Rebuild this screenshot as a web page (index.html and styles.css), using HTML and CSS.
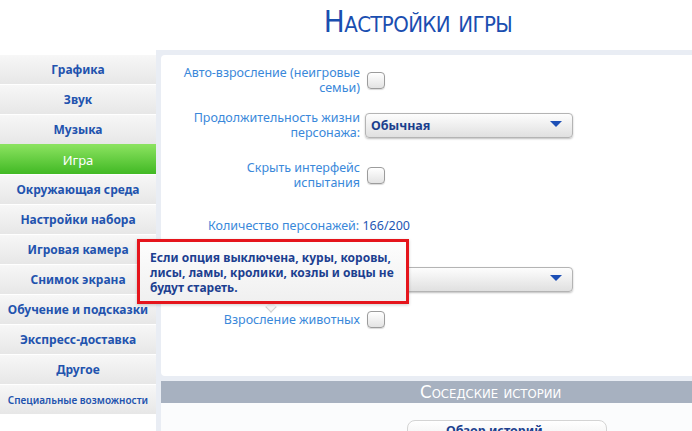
FILE: index.html
```html
<!DOCTYPE html>
<html lang="ru">
<head>
  <meta charset="UTF-8">
  <title>Настройки игры</title>
  <link rel="stylesheet" href="styles.css">
</head>
<body>
  <div class="page">
    <div class="top">
      <h1 class="title">Настройки игры</h1>
    </div>

    <nav class="menu">
      <div class="menu-item">Графика</div>
      <div class="menu-item">Звук</div>
      <div class="menu-item">Музыка</div>
      <div class="menu-item active">Игра</div>
      <div class="menu-item">Окружающая среда</div>
      <div class="menu-item">Настройки набора</div>
      <div class="menu-item">Игровая камера</div>
      <div class="menu-item">Снимок экрана</div>
      <div class="menu-item">Обучение и подсказки</div>
      <div class="menu-item">Экспресс-доставка</div>
      <div class="menu-item">Другое</div>
      <div class="menu-item small">Специальные возможности</div>
    </nav>

    <main class="panel">
      <div class="settings">
        <div class="row r1">
          <div class="label">Авто-взросление (неигровые семьи)</div>
          <div class="check"></div>
        </div>
        <div class="row r2">
          <div class="label">Продолжительность жизни персонажа:</div>
          <div class="select"><span>Обычная</span><i class="arrow"></i></div>
        </div>
        <div class="row r3">
          <div class="label">Скрыть интерфейс испытания</div>
          <div class="check"></div>
        </div>
        <div class="row r4">
          <div class="count">Количество персонажей: <b>166/200</b></div>
        </div>
        <div class="row r5">
          <div class="label"></div>
          <div class="select"><span></span><i class="arrow"></i></div>
        </div>
        <div class="row r6">
          <div class="label">Взросление животных</div>
          <div class="check"></div>
        </div>

        <div class="tooltip">Если опция выключена, куры, коровы, лисы, ламы, кролики, козлы и овцы не будут стареть.</div>
        <div class="tip-caret"></div>
      </div>

      <div class="section-head">Соседские истории</div>
      <div class="section-body">
        <button class="btn">Обзор историй</button>
      </div>
    </main>
  </div>
</body>
</html>
```

FILE: styles.css
```css
* {
  margin: 0;
  padding: 0;
  box-sizing: border-box;
}

body {
  background: #fff;
  font-family: 'Noto Sans', 'DejaVu Sans', sans-serif;
  width: 692px;
  height: 431px;
  overflow: hidden;
}

.page {
  display: grid;
  grid-template-columns: 156px 1fr;
  grid-template-rows: 50px 1fr;
}

.top {
  grid-column: 2;
  display: flex;
  justify-content: center;
  padding-right: 12px;
}

.title {
  font-family: 'DejaVu Sans Condensed', 'DejaVu Sans', sans-serif;
  font-variant: small-caps;
  font-weight: normal;
  font-size: 31px;
  line-height: 40px;
  color: #1a4eb0;
  letter-spacing: -0.6px;
  margin-top: 1px;
}

/* левое меню */
.menu {
  grid-column: 1;
  grid-row: 2;
  padding-top: 4px;
}

.menu-item {
  height: 30px;
  display: flex;
  align-items: center;
  justify-content: center;
  font-size: 12px;
  font-weight: bold;
  color: #2253ae;
  background: linear-gradient(#f7f7f7, #e7e7e7);
  border-top: 1px solid #fff;
}

.menu-item.small {
  font-size: 10px;
  font-weight: 600;
}

.menu-item.active {
  color: #fff;
  font-weight: normal;
  font-size: 13px;
  background: linear-gradient(#8ae25f, #41b924);
  border-top-color: #8ae25f;
}

/* правая панель */
.panel {
  grid-column: 2;
  grid-row: 2;
  background: #e9edf4;
  padding: 5px 0 0 5px;
  height: 381px;
}

.settings {
  position: relative;
  background: #fff;
  border-radius: 4px 0 0 4px;
  height: 321px;
  padding-top: 7px;
}

.row {
  display: grid;
  grid-template-columns: 199px 1fr;
  column-gap: 7px;
  align-items: center;
  height: 36px;
}

.r2 { margin-top: 9px; }
.r3 { margin-top: 14px; }
.r4 { margin-top: 14px; }
.r5 { margin-top: 18px; }
.r6 { margin-top: 4px; }

.label {
  text-align: right;
  font-size: 12.5px;
  line-height: 15px;
  color: #3a88da;
  padding-left: 14px;
}

.r3 .label {
  padding-left: 70px;
}

.count {
  grid-column: 1 / 3;
  padding-left: 47px;
  font-size: 12.5px;
  color: #3a88da;
}

.count b {
  font-weight: normal;
  color: #1e56b4;
}

.check {
  width: 18px;
  height: 17px;
  border: 1px solid #9c9c9c;
  border-radius: 4px;
  background: linear-gradient(#fff, #e3e3e3);
  box-shadow: 0 1px 1px rgba(0, 0, 0, 0.15);
}

.select {
  width: 208px;
  height: 25px;
  margin-left: -2px;
  border: 1px solid #b4b4b4;
  border-radius: 4px;
  background: linear-gradient(#fdfdfd, #e0e0e0);
  box-shadow: 0 1px 2px rgba(0, 0, 0, 0.25);
  display: flex;
  align-items: center;
  justify-content: space-between;
  padding: 0 10px 0 5px;
}

.select span {
  font-size: 12.5px;
  font-weight: bold;
  color: #1b3f8e;
}

.arrow {
  width: 0;
  height: 0;
  border-left: 6px solid transparent;
  border-right: 6px solid transparent;
  border-top: 6px solid #1c4fb6;
  margin-top: -2px;
}

/* подсказка */
.tooltip {
  position: absolute;
  left: -24px;
  top: 184px;
  width: 272px;
  height: 65px;
  padding: 8px 11px 0 10px;
  background: linear-gradient(#fdfdfd, #f0f0f0);
  border: 3px solid #e5151c;
  box-shadow: 0 1px 3px rgba(0, 0, 0, 0.2);
  font-size: 12px;
  line-height: 15px;
  font-weight: bold;
  color: #1c3f90;
  z-index: 2;
}

.tip-caret {
  position: absolute;
  left: 106px;
  top: 248px;
  width: 8px;
  height: 8px;
  background: #f6f6f6;
  border-right: 1px solid #d0d0d0;
  border-bottom: 1px solid #d0d0d0;
  transform: rotate(45deg);
  z-index: 1;
}

.section-head {
  margin-top: 5px;
  height: 22px;
  background: #a7b1c0;
  color: #fff;
  font-family: 'DejaVu Sans Condensed', 'DejaVu Sans', sans-serif;
  font-variant: small-caps;
  font-size: 18.5px;
  line-height: 22px;
  padding-left: 259px;
}

.section-body {
  background: #fbfcfd;
  height: 40px;
  padding: 15px 0 0 246px;
}

.btn {
  width: 200px;
  height: 30px;
  border: 1px solid #d4d4d4;
  border-radius: 8px;
  background: linear-gradient(#fff, #eaeaea);
  font-family: 'Noto Sans', sans-serif;
  font-size: 12.5px;
  font-weight: bold;
  color: #1b3f8e;
  text-align: left;
  padding: 0 0 8px 38px;
}
```
